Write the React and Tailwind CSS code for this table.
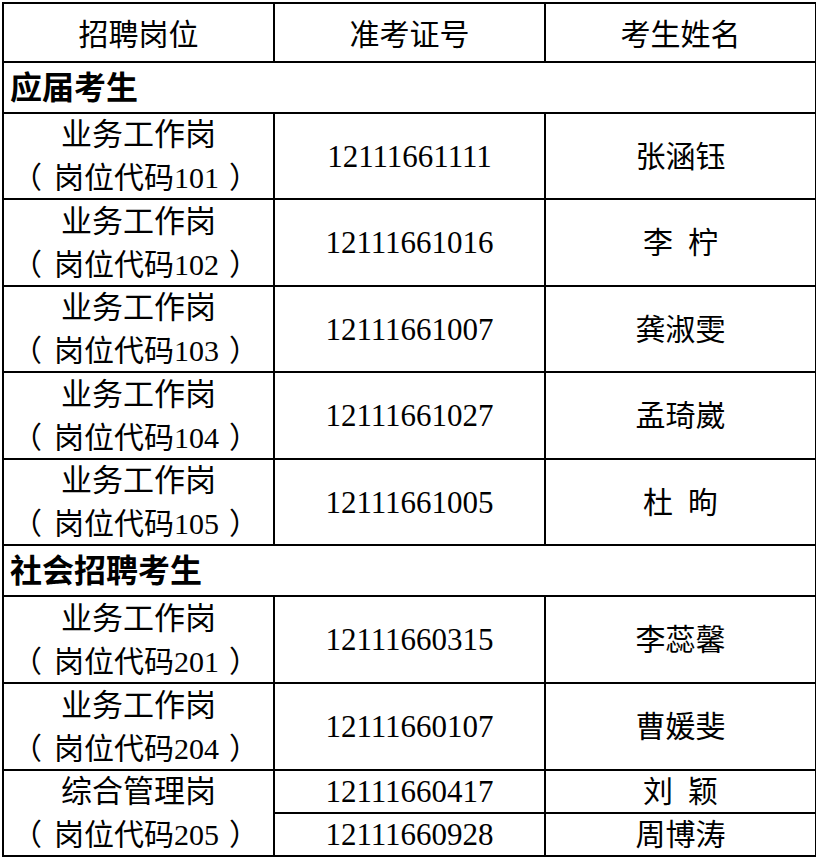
const sections = [
  {
    title: "应届考生",
    rows: [
      { code: "101", no: "12111661111", name: "张涵钰", h: "h-[86px]" },
      { code: "102", no: "12111661016", name: "李\u2002柠", h: "h-[87px]" },
      { code: "103", no: "12111661007", name: "龚淑雯", h: "h-[86px]" },
      { code: "104", no: "12111661027", name: "孟琦崴", h: "h-[87px]" },
      { code: "105", no: "12111661005", name: "杜\u2002昫", h: "h-[86px]" },
    ],
  },
  {
    title: "社会招聘考生",
    rows: [
      { code: "201", no: "12111660315", name: "李蕊馨", h: "h-[87px]" },
      { code: "204", no: "12111660107", name: "曹媛斐", h: "h-[87px]" },
    ],
  },
];

const font = { fontFamily: '"Liberation Serif", "Noto Sans CJK SC", serif' };
const cjk = { fontFamily: '"Noto Sans CJK SC", sans-serif' };

function Code({ children }) {
  return (
    <div className="pr-[6px]">
      <span className="pr-[12px]" style={cjk}>（</span>岗位代码{children}
      <span className="pl-[10px]" style={cjk}>）</span>
    </div>
  );
}

export default function App() {
  return (
    <div className="bg-white w-[816px] h-[857px] pt-[2px] pl-[2px] text-black" style={font}>
      <table className="w-[813px] border-collapse table-fixed text-[30px] leading-[41px]">
        <colgroup>
          <col className="w-[271px]" />
          <col className="w-[271px]" />
          <col className="w-[271px]" />
        </colgroup>
        <tbody>
          <tr className="h-[59px]">
            <td className="border-2 border-black text-center pt-[4px]">招聘岗位</td>
            <td className="border-2 border-black text-center pt-[4px]">准考证号</td>
            <td className="border-2 border-black text-center pt-[4px]">考生姓名</td>
          </tr>
          {sections.map((s) => (
            <Section key={s.title} section={s} />
          ))}
          <tr className="h-[43px]">
            <td rowSpan={2} className="border-2 border-black text-center">
              <div className="text-[31px]">综合管理岗</div>
              <Code>205</Code>
            </td>
            <td className="border-2 border-black text-center text-[31px]">12111660417</td>
            <td className="border-2 border-black text-center">刘&#8194;颖</td>
          </tr>
          <tr className="h-[42px]">
            <td className="border-2 border-black text-center text-[31px]">12111660928</td>
            <td className="border-2 border-black text-center">周博涛</td>
          </tr>
        </tbody>
      </table>
    </div>
  );
}

function Section({ section }) {
  return (
    <>
      <tr className="h-[51px]">
        <td colSpan={3} className="border-2 border-black pl-[6px] font-bold text-[32px] leading-[44px]">
          {section.title}
        </td>
      </tr>
      {section.rows.map((r) => (
        <tr key={r.no} className={r.h}>
          <td className="border-2 border-black text-center">
            <div className="text-[31px]">业务工作岗</div>
            <Code>{r.code}</Code>
          </td>
          <td className="border-2 border-black text-center text-[31px]">{r.no}</td>
          <td className="border-2 border-black text-center">{r.name}</td>
        </tr>
      ))}
    </>
  );
}
